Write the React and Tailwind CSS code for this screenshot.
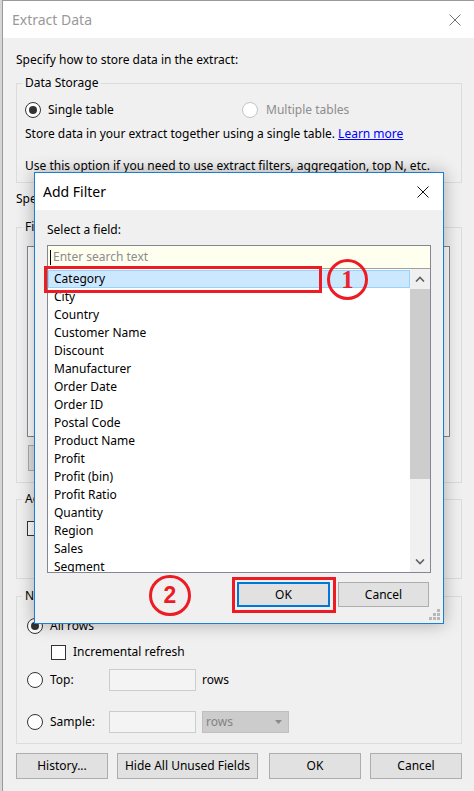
import React from "react";

const fields = [
  "Category",
  "City",
  "Country",
  "Customer Name",
  "Discount",
  "Manufacturer",
  "Order Date",
  "Order ID",
  "Postal Code",
  "Product Name",
  "Profit",
  "Profit (bin)",
  "Profit Ratio",
  "Quantity",
  "Region",
  "Sales",
  "Segment",
];

function CloseX({ color }) {
  return (
    <svg width="12" height="12" viewBox="0 0 12 12">
      <path d="M0.5 0.5L11.5 11.5M11.5 0.5L0.5 11.5" stroke={color} strokeWidth="1" />
    </svg>
  );
}

function Radio({ checked, disabled }) {
  return (
    <span
      className={`w-[16px] h-[16px] shrink-0 rounded-full border bg-white flex items-center justify-center ${
        disabled ? "border-[#c4c4c4]" : "border-[#333333]"
      }`}
    >
      {checked && <span className="w-[8px] h-[8px] rounded-full bg-[#333333]" />}
    </span>
  );
}

function Checkbox() {
  return <span className="w-[15px] h-[15px] shrink-0 border border-[#333333] bg-white" />;
}

function Button({ className = "", children }) {
  return (
    <div
      className={`h-[26px] flex items-center justify-center border border-[#adadad] bg-[#e1e1e1] ${className}`}
    >
      {children}
    </div>
  );
}

function GroupBox({ title, className = "", children }) {
  return (
    <fieldset className={`min-w-0 border border-[#dcdcdc] ${className}`}>
      <legend className="ml-[5px] px-[3px] leading-[18px]">{title}</legend>
      {children}
    </fieldset>
  );
}

function Chevron({ up }) {
  return (
    <svg width="10" height="6" viewBox="0 0 10 6">
      <path
        d={up ? "M1 5.5L5 1.5L9 5.5" : "M1 0.5L5 4.5L9 0.5"}
        stroke="#606060"
        strokeWidth="1.6"
        fill="none"
      />
    </svg>
  );
}

function Grip() {
  return (
    <svg width="11" height="11" viewBox="0 0 11 11" fill="#b8b8b8">
      <rect x="8" y="0" width="3" height="3" />
      <rect x="4" y="4" width="3" height="3" />
      <rect x="8" y="4" width="3" height="3" />
      <rect x="0" y="8" width="3" height="3" />
      <rect x="4" y="8" width="3" height="3" />
      <rect x="8" y="8" width="3" height="3" />
    </svg>
  );
}

function AddFilterDialog() {
  return (
    <div className="absolute left-[34px] top-[172px] w-[410px] h-[452px] border border-[#1a7fd4] bg-[#f0f0f0] shadow-[0_0_16px_rgba(0,0,0,0.3)] flex flex-col">
      <div className="h-[37px] shrink-0 bg-white flex items-center justify-between pl-[8px] pr-[14px]">
        <span className="text-[14px]">Add Filter</span>
        <CloseX color="#111111" />
      </div>
      <div className="pl-[12px]">
        <p className="mt-[11px]">Select a field:</p>
        <div className="mt-[6px] w-[384px] border border-[#828790] flex flex-col">
          <div className="h-[23px] bg-[#fffff0] flex items-center pl-[2px] border-b border-[#a0a0a0]">
            <span className="w-[1px] h-[15px] bg-black" />
            <span className="ml-[2px] text-[#8c8c8c]">Enter search text</span>
          </div>
          <div className="h-[303px] bg-white flex">
            <div className="flex-1 overflow-hidden pt-[1px]">
              {fields.map((f, i) => (
                <div
                  key={f}
                  className={`h-[18px] flex items-center pl-[5px] border ${
                    i === 0 ? "bg-[#cce8ff] border-[#99d1ff]" : "border-transparent"
                  }`}
                >
                  {f}
                </div>
              ))}
            </div>
            <div className="w-[20px] bg-[#f0f0f0] flex flex-col">
              <div className="h-[20px] flex items-center justify-center">
                <Chevron up />
              </div>
              <div className="h-[190px] bg-[#cdcdcd]" />
              <div className="mt-auto h-[20px] flex items-center justify-center">
                <Chevron />
              </div>
            </div>
          </div>
        </div>
        <div className="mt-[9px] flex justify-end gap-[8px] pr-[14px]">
          <div className="w-[93px] h-[25px] flex items-center justify-center border-2 border-[#0078d7] bg-[#e1e1e1]">
            OK
          </div>
          <div className="w-[91px] h-[25px] flex items-center justify-center border border-[#adadad] bg-[#e1e1e1]">
            Cancel
          </div>
        </div>
      </div>
      <div className="absolute right-[3px] bottom-[3px]">
        <Grip />
      </div>
    </div>
  );
}

export default function App() {
  return (
    <div className="relative w-[474px] h-[791px] overflow-hidden bg-[#d6d6d6] font-['Noto_Sans',sans-serif] text-[12px] leading-[18px] text-black">
      <div className="ml-[2px] h-full flex flex-col border-l border-t border-[#9a9a9a] bg-[#f0f0f0]">
        <div className="h-[37px] shrink-0 bg-white flex items-center justify-between pl-[9px] pr-[13px]">
          <span className="text-[14px] text-[#999999]">Extract Data</span>
          <CloseX color="#707070" />
        </div>

        <div className="pl-[13px] pr-[12px] whitespace-nowrap">
          <p className="mt-[13px]">Specify how to store data in the extract:</p>
          <GroupBox title="Data Storage" className="mt-[5px] pb-[7px]">
            <div className="mt-[8px] pl-[8px] h-[20px] flex items-center">
              <div className="w-[217px] flex items-center gap-[7px]">
                <Radio checked />
                <span>Single table</span>
              </div>
              <div className="flex items-center gap-[8px] text-[#8d8d8d]">
                <Radio disabled />
                <span>Multiple tables</span>
              </div>
            </div>
            <p className="mt-[5px] pl-[8px]">
              Store data in your extract together using a single table.{" "}
              <span className="text-[#0000ff] underline">Learn more</span>
            </p>
            <p className="mt-[14px] pl-[8px]">
              Use this option if you need to use extract filters, aggregation, top N, etc.
            </p>
          </GroupBox>

          <p className="mt-[7px]">Specify how much data to extract:</p>
          <GroupBox title="Filters" className="mt-[10px] pb-[11px]">
            <div className="mt-[10px] ml-[10px] w-[423px] h-[191px] border border-[#828790] bg-white" />
            <div className="mt-[8px] ml-[11px] flex gap-[8px]">
              <Button className="w-[90px]">Add...</Button>
              <Button className="w-[90px]">Edit...</Button>
              <Button className="w-[90px]">Remove</Button>
            </div>
          </GroupBox>

          <GroupBox title="Aggregation" className="mt-[7px] pb-[15px]">
            <div className="mt-[10px] pl-[10px] h-[20px] flex items-center gap-[7px]">
              <Checkbox />
              <span>Aggregate data for visible dimensions</span>
            </div>
            <div className="mt-[5px] pl-[34px] h-[20px] flex items-center gap-[7px]">
              <Checkbox />
              <span>Roll up dates to</span>
            </div>
          </GroupBox>

          <GroupBox title="Number of Rows" className="mt-[8px] pb-[10px]">
            <div className="mt-[11px] pl-[10px] h-[20px] flex items-center gap-[7px]">
              <Radio checked />
              <span>All rows</span>
            </div>
            <div className="mt-[6px] pl-[34px] h-[20px] flex items-center gap-[7px]">
              <Checkbox />
              <span>Incremental refresh</span>
            </div>
            <div className="mt-[7px] pl-[10px] h-[22px] flex items-center">
              <Radio />
              <span className="ml-[7px] w-[59px]">Top:</span>
              <span className="w-[87px] h-[22px] border border-[#cccccc] bg-[#f4f4f4]" />
              <span className="ml-[6px]">rows</span>
            </div>
            <div className="mt-[20px] pl-[10px] h-[22px] flex items-center">
              <Radio />
              <span className="ml-[7px] w-[59px]">Sample:</span>
              <span className="w-[87px] h-[22px] border border-[#cccccc] bg-[#f4f4f4]" />
              <span className="ml-[6px] w-[87px] h-[22px] border border-[#bfbfbf] bg-[#cccccc] flex items-center justify-between pl-[3px] pr-[6px] text-[#838383]">
                rows
                <svg width="7" height="4" viewBox="0 0 7 4">
                  <path d="M0 0H7L3.5 4Z" fill="#8a8a8a" />
                </svg>
              </span>
            </div>
          </GroupBox>

          <div className="mt-[9px] flex justify-between">
            <div className="flex gap-[9px]">
              <Button className="w-[92px]">History...</Button>
              <Button className="w-[141px]">Hide All Unused Fields</Button>
            </div>
            <div className="flex gap-[9px]">
              <Button className="w-[92px]">OK</Button>
              <Button className="w-[92px]">Cancel</Button>
            </div>
          </div>
        </div>
      </div>

      <AddFilterDialog />

      {/* red annotations */}
      <div className="absolute left-[44px] top-[266px] w-[278px] h-[27px] border-[3px] border-[#ed1c24]" />
      <div className="absolute left-[327px] top-[259px] w-[41px] h-[41px] rounded-full border-[3px] border-[#ed1c24] flex items-center justify-center font-['Liberation_Serif',serif] font-bold text-[25px] leading-none text-[#e8242c]">
        1
      </div>
      <div className="absolute left-[232px] top-[577px] w-[104px] h-[36px] border-[3px] border-[#ed1c24]" />
      <div className="absolute left-[149px] top-[575px] w-[42px] h-[41px] rounded-full border-[3px] border-[#ed1c24] flex items-center justify-center font-['Liberation_Sans',sans-serif] font-bold text-[23px] leading-none text-[#ed1c24]">
        2
      </div>
    </div>
  );
}
